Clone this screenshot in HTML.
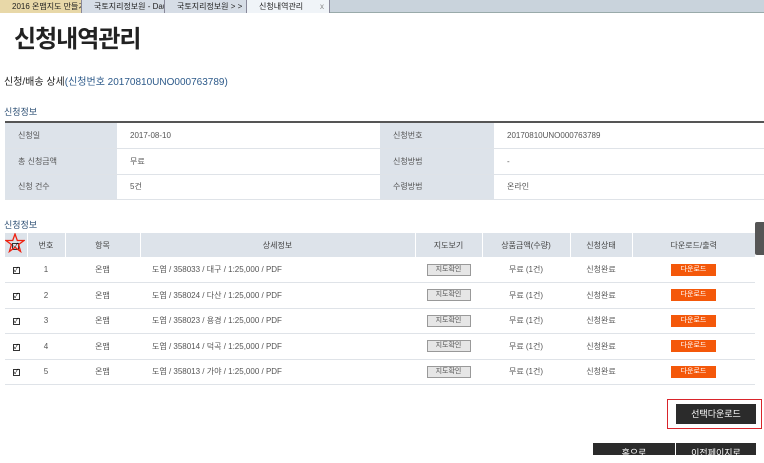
<!DOCTYPE html>
<html><head><meta charset="utf-8"><style>
*{margin:0;padding:0;box-sizing:border-box}
body{width:764px;height:453px;overflow:hidden;background:#fff;font-family:"Liberation Sans","Noto Sans CJK KR",sans-serif;color:#444;position:relative}
.a{position:absolute}
.tabs{left:0;top:0;width:764px;height:13px;background:#c9d3dc;border-bottom:1px solid #9aa}
.tab{top:0;height:13px;font-size:8px;line-height:13px;padding-left:12px;color:#222;border-right:1px solid #889;white-space:nowrap;overflow:hidden}
table{border-collapse:collapse;position:absolute;font-size:8px;color:#555}
td{height:25.5px;border-bottom:1px solid #dfe3e8}
.lb{background:#dde3ea;padding-left:13px}
.vl{padding-left:13px}
.t2 td{text-align:center}
.t2 th{background:#dde3ea;font-weight:normal;height:24px;border-left:1px solid #fff;font-size:8px;color:#444}
.btn{display:inline-block;width:44px;height:12px;border:1px solid #999;background:#e6e6e6;font-size:7px;line-height:10px;color:#555}
.dl{display:inline-block;width:45px;height:12px;background:#f4580a;color:#fff;font-size:7px;line-height:12px}
.ck{display:inline-block;width:7px;height:7px;border:1px solid #333;font-size:7px;line-height:6px;color:#000}
</style></head><body>
<div class="a tabs"></div>
<div class="a tab" style="left:0;width:82px;background:#e8d8a8">2016 온맵지도 만들기</div>
<div class="a tab" style="left:82px;width:83px;background:#d6dde6">국토지리정보원 - Daum 통합 ...</div>
<div class="a tab" style="left:165px;width:82px;background:#d6dde6">국토지리정보원 &gt; &gt;</div>
<div class="a tab" style="left:247px;width:83px;background:#f0f4f8">신청내역관리 <span style="position:absolute;right:5px;color:#888">x</span></div>
<div class="a" style="left:14px;top:19px;font-size:24px;color:#222;font-weight:bold;letter-spacing:-1px">신청내역관리</div>
<div class="a" style="left:4px;top:73px;font-size:10px;color:#222">신청/배송 상세<span style="color:#2d5a8a">(신청번호 20170810UNO000763789)</span></div>
<div class="a" style="left:4px;top:105px;font-size:9px;color:#2d4f74">신청정보</div>
<div class="a" style="left:5px;top:121px;width:759px;height:2px;background:#555"></div>
<table style="left:5px;top:123px;width:759px">
<tr><td class="lb" style="width:112px">신청일</td><td class="vl" style="width:263px">2017-08-10</td><td class="lb" style="width:114px">신청번호</td><td class="vl">20170810UNO000763789</td></tr>
<tr><td class="lb">총 신청금액</td><td class="vl">무료</td><td class="lb">신청방법</td><td class="vl">-</td></tr>
<tr><td class="lb">신청 건수</td><td class="vl">5건</td><td class="lb">수령방법</td><td class="vl">온라인</td></tr>
</table>
<div class="a" style="left:4px;top:218px;font-size:9px;color:#2d4f74">신청정보</div>
<table class="t2" style="left:5px;top:233px;width:750px">
<tr><th style="width:22px;border-left:0"><span class="ck">✓</span></th><th style="width:38px">번호</th><th style="width:75px">항목</th><th style="width:275px">상세정보</th><th style="width:67px">지도보기</th><th style="width:88px">상품금액(수량)</th><th style="width:62px">신청상태</th><th>다운로드/출력</th></tr>
<tr><td><span class="ck">✓</span></td><td>1</td><td>온맵</td><td style="text-align:left;padding-left:12px">도엽 / 358033 / 대구 / 1:25,000 / PDF</td><td><span class="btn">지도확인</span></td><td>무료 (1건)</td><td>신청완료</td><td><span class="dl">다운로드</span></td></tr>
<tr><td><span class="ck">✓</span></td><td>2</td><td>온맵</td><td style="text-align:left;padding-left:12px">도엽 / 358024 / 다산 / 1:25,000 / PDF</td><td><span class="btn">지도확인</span></td><td>무료 (1건)</td><td>신청완료</td><td><span class="dl">다운로드</span></td></tr>
<tr><td><span class="ck">✓</span></td><td>3</td><td>온맵</td><td style="text-align:left;padding-left:12px">도엽 / 358023 / 용경 / 1:25,000 / PDF</td><td><span class="btn">지도확인</span></td><td>무료 (1건)</td><td>신청완료</td><td><span class="dl">다운로드</span></td></tr>
<tr><td><span class="ck">✓</span></td><td>4</td><td>온맵</td><td style="text-align:left;padding-left:12px">도엽 / 358014 / 덕곡 / 1:25,000 / PDF</td><td><span class="btn">지도확인</span></td><td>무료 (1건)</td><td>신청완료</td><td><span class="dl">다운로드</span></td></tr>
<tr><td><span class="ck">✓</span></td><td>5</td><td>온맵</td><td style="text-align:left;padding-left:12px">도엽 / 358013 / 가야 / 1:25,000 / PDF</td><td><span class="btn">지도확인</span></td><td>무료 (1건)</td><td>신청완료</td><td><span class="dl">다운로드</span></td></tr>
</table>
<svg class="a" style="left:5px;top:233px" width="20" height="20" viewBox="0 0 20 20"><polygon points="10,1 12.3,7.5 19,7.5 13.6,11.5 15.6,18.5 10,14.3 4.4,18.5 6.4,11.5 1,7.5 7.7,7.5" fill="none" stroke="#e21" stroke-width="1.3"/></svg>
<div class="a" style="left:755px;top:222px;width:9px;height:33px;background:#555;border-radius:2px 0 0 2px"></div>
<div class="a" style="left:667px;top:399px;width:95px;height:30px;border:1.5px solid #d9242b"></div>
<div class="a" style="left:676px;top:404px;width:80px;height:20px;background:#2b2b2b;color:#fff;font-size:9px;text-align:center;line-height:20px">선택다운로드</div>
<div class="a" style="left:593px;top:443px;width:82px;height:12px;background:#2b2b2b;color:#fff;font-size:9px;text-align:center;line-height:20px">홈으로</div>
<div class="a" style="left:676px;top:443px;width:80px;height:12px;background:#2b2b2b;color:#fff;font-size:9px;text-align:center;line-height:20px">이전페이지로</div>
</body></html>
